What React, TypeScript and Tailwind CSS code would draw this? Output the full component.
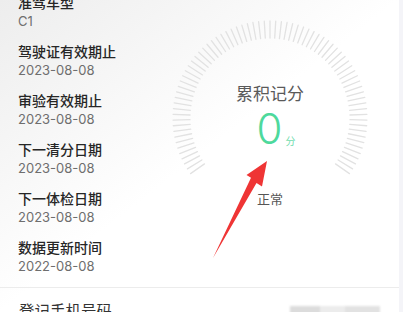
import React from "react";

const items = [
  { label: "准驾车型", value: "C1" },
  { label: "驾驶证有效期止", value: "2023-08-08" },
  { label: "审验有效期止", value: "2023-08-08" },
  { label: "下一清分日期", value: "2023-08-08" },
  { label: "下一体检日期", value: "2023-08-08" },
  { label: "数据更新时间", value: "2022-08-08" },
];

function Ticks() {
  const n = 74;
  const lines = [];
  const cx = 100;
  const cy = 100;
  const ro = 97;
  const ri = 80;
  for (let i = 0; i <= n; i++) {
    const phi = ((-125 + (250 * i) / n) * Math.PI) / 180;
    const s = Math.sin(phi);
    const c = Math.cos(phi);
    lines.push(
      <line
        key={i}
        x1={cx + ro * s}
        y1={cy - ro * c}
        x2={cx + ri * s}
        y2={cy - ri * c}
        stroke="#e2e2e2"
        strokeWidth={1.3}
        strokeLinecap="round"
      />
    );
  }
  return (
    <svg className="absolute inset-0" width={200} height={200} viewBox="0 0 200 200">
      {lines}
    </svg>
  );
}

export default function App() {
  const font = { fontFamily: '"Inter", "Noto Sans CJK SC", sans-serif' };
  return (
    <div
      className="relative w-[403px] h-[312px] overflow-hidden bg-[#f4f4f8]"
      style={font}
    >
      <div className="w-[399px] h-full bg-gradient-to-br from-[#ededed] via-white to-white">
        <div className="flex">
          <div className="w-[160px] pl-[18px] -mt-[7px] pb-[13px] flex flex-col gap-[13px]">
            {items.map((it) => (
              <div key={it.label} className="flex flex-col">
                <div className="text-[14px] leading-[20px] font-medium text-[#262626] whitespace-nowrap">
                  {it.label}
                </div>
                <div className="text-[13px] leading-[16px] text-[#6e6e6e] whitespace-nowrap">
                  {it.value}
                </div>
              </div>
            ))}
          </div>
          <div className="flex-1">
            <div className="relative ml-[10px] mt-[18px] w-[200px] h-[200px]">
              <Ticks />
              <div className="relative flex flex-col items-center pt-[64px]">
                <div className="text-[17px] leading-[24px] text-[#5a5a5a]">累积记分</div>
                <div className="flex items-end mt-[2px] ml-[12px]">
                  <span className="text-[42px] leading-[42px] font-light text-[#4ed99c]">0</span>
                  <span className="text-[10px] leading-[14px] text-[#6fdcae] ml-[3px] mb-[2px]">分</span>
                </div>
                <div className="mt-[40px] text-[13px] leading-[18px] text-[#555]">正常</div>
              </div>
            </div>
          </div>
        </div>
        <div className="h-px bg-[#ececec]" />
        <div className="flex items-center justify-between pl-[19px] pt-[14px]">
          <div className="text-[15.5px] leading-[20px] text-[#333]">登记手机号码</div>
          <div className="mr-[19px] mt-[2px] flex h-[14px] w-[90px] bg-[#e6e6e6] blur-[1px]">
            <div className="w-[30px] bg-[#dcdcdc]" />
            <div className="w-[25px] bg-[#ececec]" />
            <div className="w-[35px] bg-[#e2e2e2]" />
          </div>
        </div>
      </div>
      <svg className="absolute left-0 top-0" width={403} height={312} viewBox="0 0 403 312">
        <polygon
          points="267,161 246.5,175 251,177.8 213,258 256.5,183 262,186.5"
          fill="#ef3535"
        />
      </svg>
    </div>
  );
}
